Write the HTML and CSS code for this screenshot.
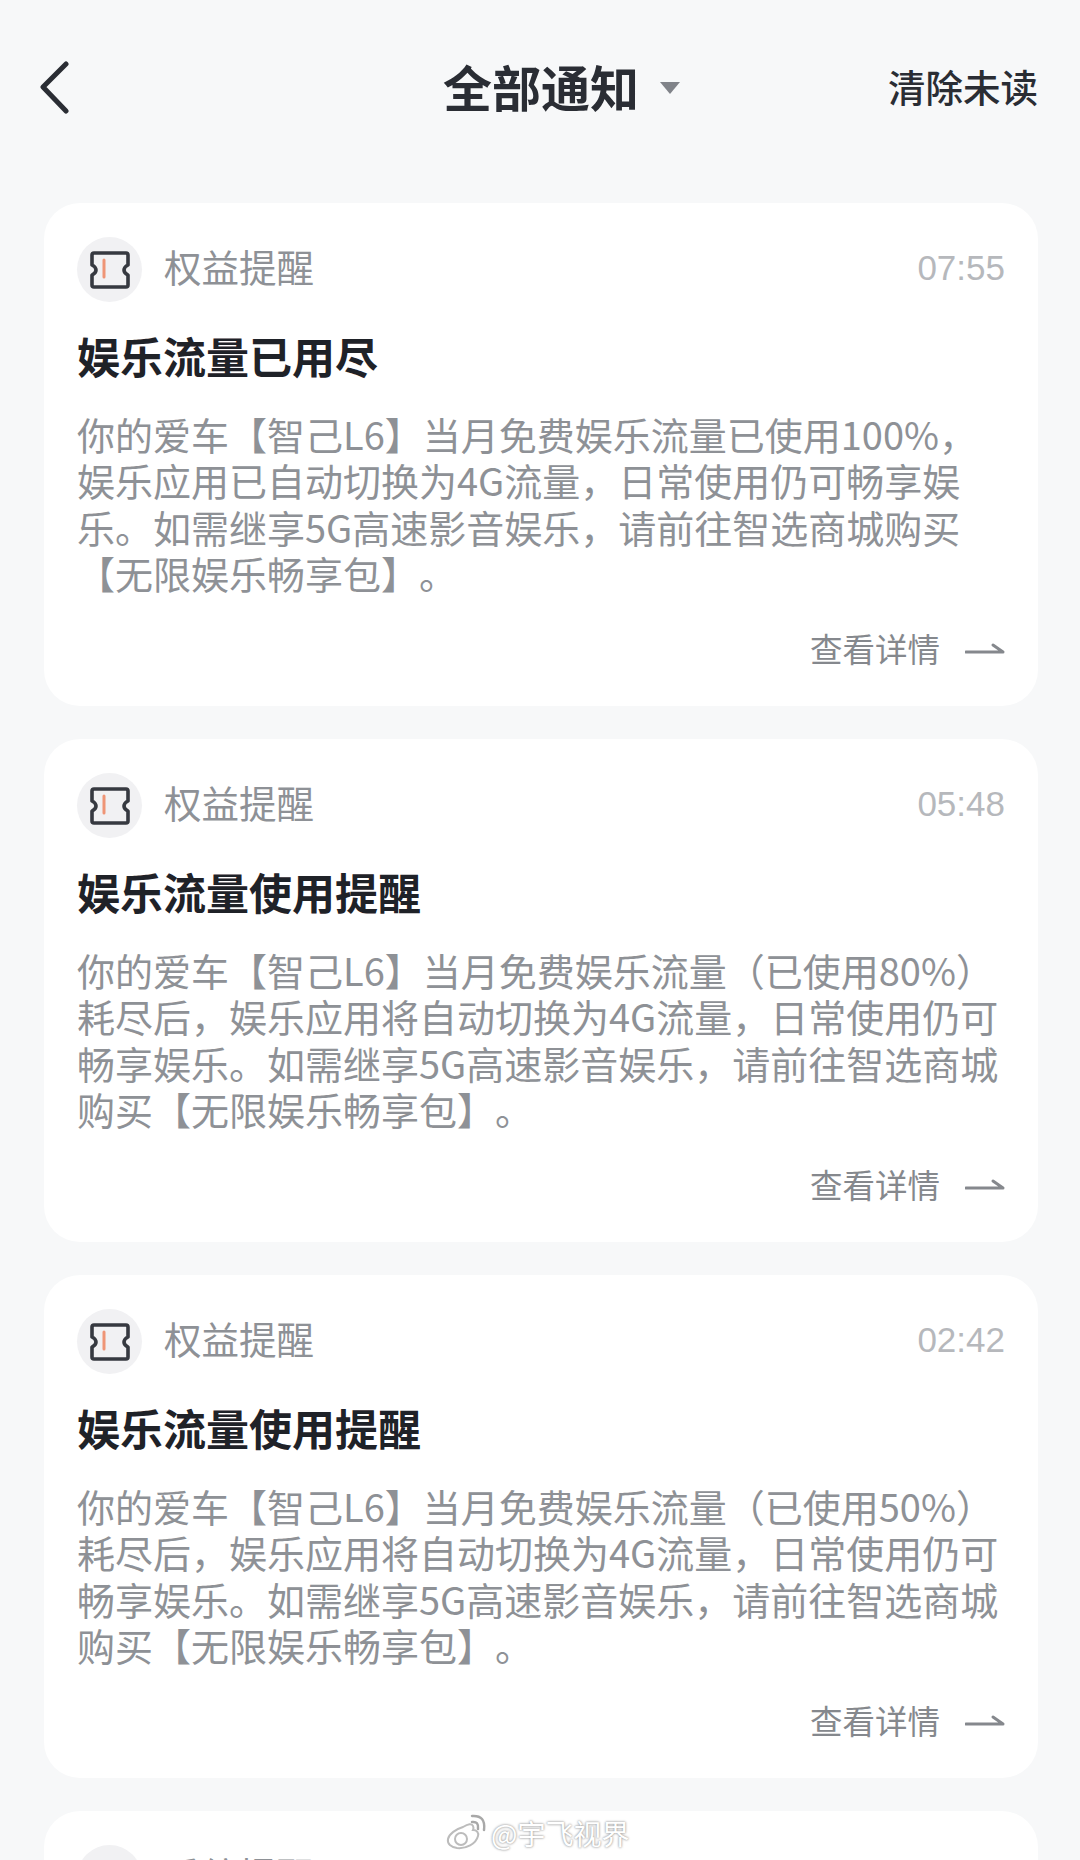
FILE: index.html

```html
<!DOCTYPE html>
<html lang="zh-CN">
<head>
  <meta charset="UTF-8">
  <title>全部通知</title>
  <link rel="stylesheet" href="styles.css">
</head>
<body>
  <div class="page">
    <div class="topbar">
      <svg class="back" width="34" height="54" viewBox="0 0 34 54"><path d="M28 3 L5 26 L28 50" /></svg>
      <div class="title"><span>全部通知</span><i class="caret"></i></div>
      <div class="clear">清除未读</div>
    </div>

    <div class="card">
      <div class="head">
        <div class="badge">
          <svg width="42" height="40" viewBox="0 0 42 40"><path class="tk" d="M5 3 H37 Q39 3 39 5 V15 Q35 17 35 20 Q35 23 39 25 V35 Q39 37 37 37 H5 Q3 37 3 35 V25 Q7 23 7 20 Q7 17 3 15 V5 Q3 3 5 3 Z" /><path class="tk-line" d="M15 10 V27" /></svg>
        </div>
        <span class="kind">权益提醒</span>
        <span class="time">07:55</span>
      </div>
      <h3>娱乐流量已用尽</h3>
      <p>你的爱车【智己L6】当月免费娱乐流量已使用100%，<br>娱乐应用已自动切换为4G流量，日常使用仍可畅享娱<br>乐。如需继享5G高速影音娱乐，请前往智选商城购买<br>【无限娱乐畅享包】。</p>
      <div class="more"><span>查看详情</span><svg width="40" height="14" viewBox="0 0 40 14"><path d="M1 11 H38 L28 4" /></svg></div>
    </div>

    <div class="card">
      <div class="head">
        <div class="badge">
          <svg width="42" height="40" viewBox="0 0 42 40"><path class="tk" d="M5 3 H37 Q39 3 39 5 V15 Q35 17 35 20 Q35 23 39 25 V35 Q39 37 37 37 H5 Q3 37 3 35 V25 Q7 23 7 20 Q7 17 3 15 V5 Q3 3 5 3 Z" /><path class="tk-line" d="M15 10 V27" /></svg>
        </div>
        <span class="kind">权益提醒</span>
        <span class="time">05:48</span>
      </div>
      <h3>娱乐流量使用提醒</h3>
      <p>你的爱车【智己L6】当月免费娱乐流量（已使用80%）<br>耗尽后，娱乐应用将自动切换为4G流量，日常使用仍可<br>畅享娱乐。如需继享5G高速影音娱乐，请前往智选商城<br>购买【无限娱乐畅享包】。</p>
      <div class="more"><span>查看详情</span><svg width="40" height="14" viewBox="0 0 40 14"><path d="M1 11 H38 L28 4" /></svg></div>
    </div>

    <div class="card">
      <div class="head">
        <div class="badge">
          <svg width="42" height="40" viewBox="0 0 42 40"><path class="tk" d="M5 3 H37 Q39 3 39 5 V15 Q35 17 35 20 Q35 23 39 25 V35 Q39 37 37 37 H5 Q3 37 3 35 V25 Q7 23 7 20 Q7 17 3 15 V5 Q3 3 5 3 Z" /><path class="tk-line" d="M15 10 V27" /></svg>
        </div>
        <span class="kind">权益提醒</span>
        <span class="time">02:42</span>
      </div>
      <h3>娱乐流量使用提醒</h3>
      <p>你的爱车【智己L6】当月免费娱乐流量（已使用50%）<br>耗尽后，娱乐应用将自动切换为4G流量，日常使用仍可<br>畅享娱乐。如需继享5G高速影音娱乐，请前往智选商城<br>购买【无限娱乐畅享包】。</p>
      <div class="more"><span>查看详情</span><svg width="40" height="14" viewBox="0 0 40 14"><path d="M1 11 H38 L28 4" /></svg></div>
    </div>

    <div class="card">
      <div class="head">
        <div class="badge"></div>
        <span class="kind">系统提醒</span>
      </div>
    </div>
  </div>

  <div class="mark">
    <svg width="42" height="38" viewBox="0 0 42 38"><path class="wb-body" d="M17 13 C22 10 26 9 27 12 C28 14 27 16 27 16 C31 16 33 19 32 22 C30 30 20 35 11 34 C5 33 1 30 2 25 C3 20 10 15 17 13 Z" /><circle class="wb-eye" cx="15" cy="25" r="6" /><path class="wb-arc" d="M26 8 Q33 7 32 15" /><path class="wb-arc" d="M26 2 Q40 1 38 16" /></svg>
    <span>@宇飞视界</span>
  </div>
</body>
</html>
```

FILE: styles.css

```css
* { box-sizing: border-box; }
html, body { margin: 0; padding: 0; }
body { width: 1080px; height: 1860px; overflow: hidden; position: relative; background: #f7f8f9; font-family: "Noto Sans CJK SC", "Noto Sans", sans-serif; text-spacing-trim: space-all; }
.page { display: flex; flex-direction: column; gap: 33px; padding: 0 42px 0 44px; }

.topbar { height: 170px; display: flex; align-items: center; padding-top: 6px; flex-shrink: 0; }
.back { margin-left: -6px; }
.back path { fill: none; stroke: #2a2d34; stroke-width: 5; stroke-linecap: round; stroke-linejoin: round; }
.title { display: flex; align-items: center; gap: 21px; margin: 0 0 4px 371px; color: #2a2d34; font-size: 49px; font-weight: 700; line-height: 64px; }
.caret { width: 0; height: 0; border-left: 10px solid transparent; border-right: 10px solid transparent; border-top: 12px solid #808389; margin-top: 4px; }
.clear { margin: 0 0 4px auto; color: #2a2d34; font-size: 37.5px; font-weight: 500; line-height: 50px; }

.card { background: #fff; border-radius: 36px; padding: 34px 33px 0; height: 503px; flex-shrink: 0; }
.head { display: flex; align-items: center; height: 65px; }
.badge { width: 65px; height: 65px; border-radius: 50%; background: #f1f1f3; display: flex; align-items: center; justify-content: center; flex-shrink: 0; }
.tk { fill: none; stroke: #363940; stroke-width: 3.6; stroke-linejoin: round; }
.tk-line { fill: none; stroke: #ef9576; stroke-width: 3; stroke-linecap: round; }
.kind { margin: 0 0 8px 22px; color: #8e9196; font-size: 37.5px; line-height: 50px; }
.time { margin: 0 0 3px auto; color: #b6b8bc; font-family: "Liberation Sans", sans-serif; font-size: 35px; line-height: 50px; }

.card h3 { margin: 24px 0 0; color: #1f2228; font-size: 43px; font-weight: 700; line-height: 58px; }
.card p { margin: 27px -10px 0 0; color: #8e9196; font-size: 38px; line-height: 46.3px; white-space: nowrap; }
.more { display: flex; align-items: center; justify-content: flex-end; gap: 25px; margin-top: 30px; color: #85888d; font-size: 32.5px; line-height: 44px; }
.more path { fill: none; stroke: #85888d; stroke-width: 3; stroke-linecap: round; stroke-linejoin: round; }

.mark { position: absolute; left: 446px; top: 1814px; display: flex; align-items: center; gap: 3px; color: #fff; font-size: 28px; line-height: 38px; text-shadow: 0 0 2px #9a9a9a, 0 0 3px #b5b5b5; }
.wb-body, .wb-eye { fill: #fff; stroke: #bcbcbc; stroke-width: 2; }
.wb-arc { fill: none; stroke: #a8a8a8; stroke-width: 2.5; stroke-linecap: round; }
```
